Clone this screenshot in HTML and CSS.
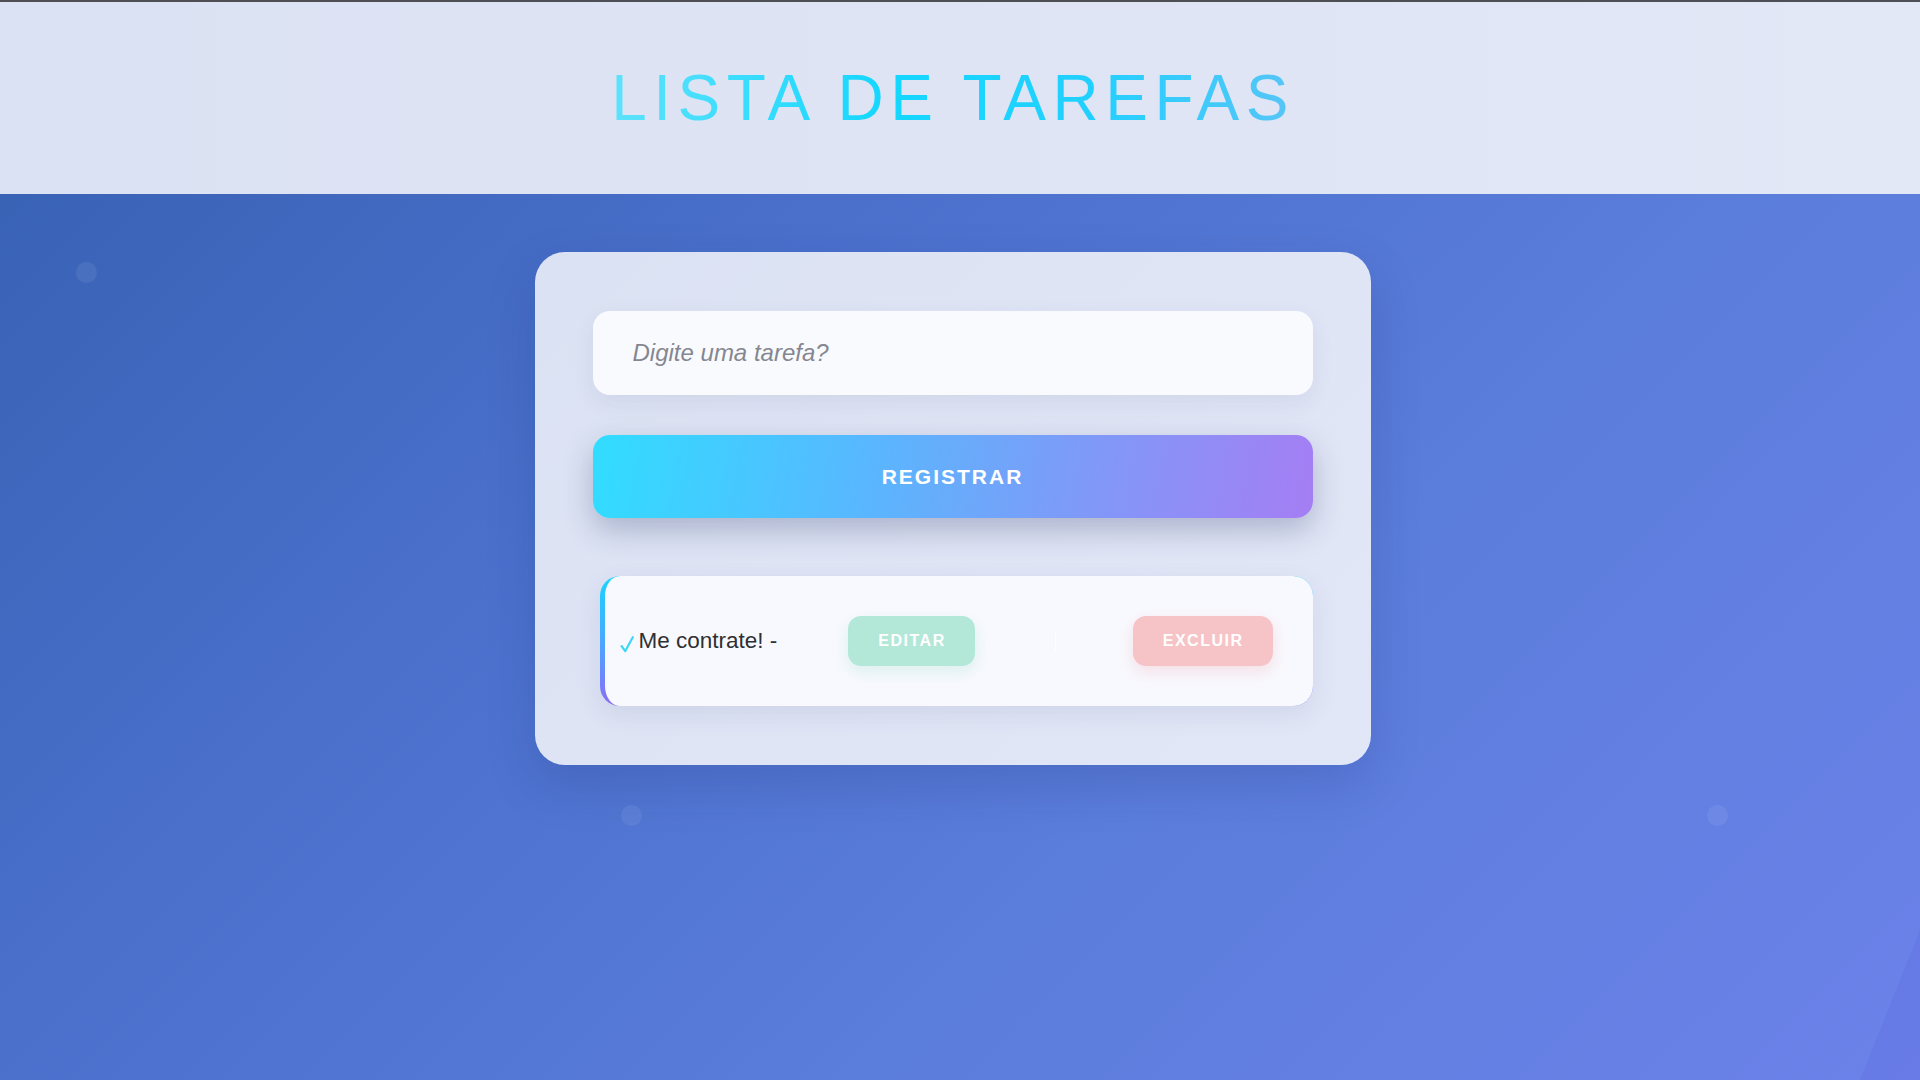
FILE: index.html
```html
<!DOCTYPE html>
<html lang="pt-BR">
<head>
<meta charset="utf-8">
<title>Lista de Tarefas</title>
<link rel="stylesheet" href="styles.css">
</head>
<body>
<header class="top">
  <h1 class="title">LISTA DE TAREFAS</h1>
</header>
<main class="main">
  <span class="dot dot-a"></span>
  <span class="dot dot-b"></span>
  <span class="dot dot-c"></span>
  <span class="corner"></span>
  <section class="card">
    <input class="task-input" type="text" placeholder="Digite uma tarefa?">
    <button class="btn-register" type="button">REGISTRAR</button>
    <ul class="tasks">
      <li class="task">
        <span class="task-text"><svg class="check" viewBox="0 0 14 18" width="14" height="18" aria-hidden="true"><path d="M1.6 11.2 L5.2 16.2 L12.8 2.2" fill="none" stroke="#3cd6f7" stroke-width="2.2" stroke-linecap="round" stroke-linejoin="round"/></svg>Me contrate! -</span>
        <button class="btn-edit" type="button">EDITAR</button>
        <span class="sep"></span>
        <button class="btn-delete" type="button">EXCLUIR</button>
      </li>
    </ul>
  </section>
</main>
</body>
</html>
```

FILE: styles.css
```css
* { box-sizing: border-box; }

html, body { margin: 0; padding: 0; }

body {
  font-family: "Liberation Sans", Arial, sans-serif;
  min-height: 100vh;
  background: linear-gradient(135deg, #3560b0 0%, #4a70cc 35%, #5b7ddb 65%, #6c82ea 100%);
  overflow: hidden;
}

.top {
  height: 194px;
  border-top: 2px solid #4d4f55;
  background: linear-gradient(90deg, #dbe2f3 0%, #dee4f4 50%, #e3e8f7 100%);
  display: flex;
  align-items: center;
  justify-content: center;
  padding-right: 15px;
}

.title {
  margin: 0;
  font-family: "Liberation Sans", Arial, sans-serif;
  font-weight: 400;
  font-size: 64px;
  letter-spacing: 6.5px;
  line-height: 1;
  padding-left: 1px;
  background: linear-gradient(90deg, #5fe2fb 0%, #14d7ff 40%, #22d0ff 70%, #57c5f6 100%);
  -webkit-background-clip: text;
  background-clip: text;
  color: transparent;
}

.main {
  position: relative;
  min-height: 886px;
  padding: 58px 15px 0 0;
  display: flex;
  justify-content: center;
  align-items: flex-start;
}

.dot {
  position: absolute;
  width: 21px;
  height: 21px;
  border-radius: 50%;
  background: rgba(255, 255, 255, 0.07);
}
.dot-a { left: 76px; top: 68px; }
.dot-b { left: 621px; top: 611px; }
.dot-c { left: 1707px; top: 611px; }

.corner {
  position: absolute;
  right: 0;
  bottom: 0;
  width: 60px;
  height: 150px;
  background: rgba(90, 100, 220, 0.22);
  clip-path: polygon(100% 0, 100% 100%, 0 100%);
}

.card {
  position: relative;
  width: 836px;
  padding: 59px 58px 59px;
  border-radius: 30px;
  background: linear-gradient(135deg, #dbe2f3 0%, #dfe5f5 60%, #e2e7f7 100%);
  box-shadow: 0 20px 50px rgba(20, 40, 110, 0.18);
}

.task-input {
  display: block;
  width: 100%;
  height: 84px;
  border: none;
  outline: none;
  border-radius: 17px;
  background: #f9fafe;
  padding: 0 40px;
  font-family: "Liberation Sans", Arial, sans-serif;
  font-size: 24px;
  color: #333;
  box-shadow: 0 8px 22px rgba(60, 70, 120, 0.08);
}
.task-input::placeholder {
  color: #858790;
  font-style: italic;
}

.btn-register {
  display: block;
  width: 100%;
  height: 83px;
  margin-top: 40px;
  border: none;
  border-radius: 17px;
  background: linear-gradient(100deg, #31ddff 0%, #55baff 35%, #7b9cf8 65%, #a57ef4 100%);
  color: #fff;
  font-family: "Liberation Sans", Arial, sans-serif;
  font-weight: 700;
  font-size: 21px;
  letter-spacing: 2px;
  box-shadow: 0 12px 30px rgba(40, 50, 100, 0.28);
}

.tasks {
  list-style: none;
  margin: 58px 0 0 7px;
  padding: 0;
}

.task {
  display: flex;
  align-items: center;
  height: 130px;
  padding: 0 40px 0 14px;
  border-left: 5px solid transparent;
  border-radius: 20px;
  background:
    linear-gradient(#f8f9fe, #f8f9fe) padding-box,
    linear-gradient(180deg, #18d4ff 0%, #4aa8ff 50%, #8a6cf6 100%) border-box;
  box-shadow: 0 8px 24px rgba(60, 70, 130, 0.10);
}

.task-text {
  font-size: 22.5px;
  color: #2f3033;
  display: flex;
  align-items: center;
}

.check {
  display: block;
  margin-left: 1px;
  margin-right: 5px;
  position: relative;
  top: 3px;
}

.btn-edit,
.btn-delete {
  height: 50px;
  padding: 0 29px 0 30px;
  border: none;
  border-radius: 13px;
  color: #fff;
  font-family: "Liberation Sans", Arial, sans-serif;
  font-weight: 700;
  font-size: 16px;
  letter-spacing: 1.5px;
}

.btn-edit {
  margin-left: 71px;
  background: #b3e8d9;
  box-shadow: 0 6px 16px rgba(120, 210, 180, 0.22);
}

.sep {
  width: 1px;
  height: 20px;
  margin-left: 80px;
  background: rgba(255, 255, 255, 0.6);
}

.btn-delete {
  margin-left: auto;
  background: #f6c4c7;
  box-shadow: 0 6px 16px rgba(240, 150, 160, 0.25);
}
```
